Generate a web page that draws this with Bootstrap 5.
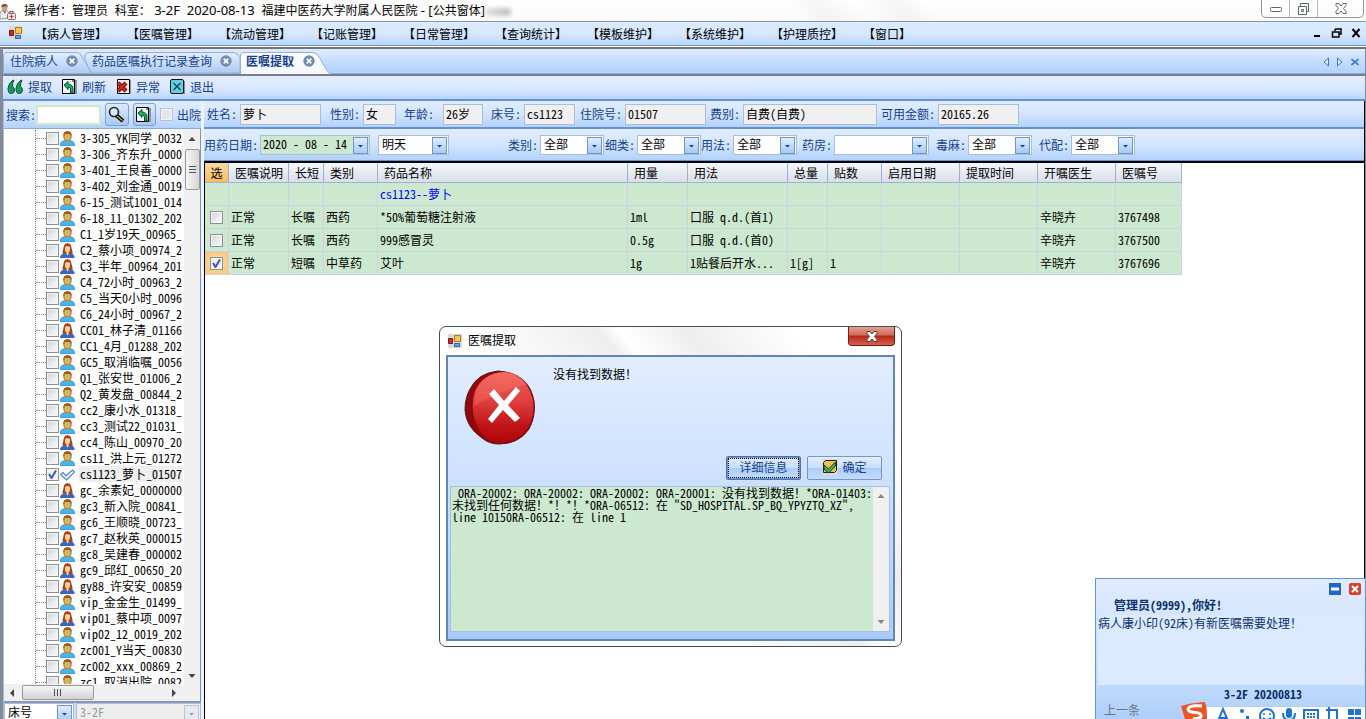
<!DOCTYPE html>
<html lang="zh-CN">
<head>
<meta charset="utf-8">
<meta name="viewport" content="width=device-width, initial-scale=1">
<title>医嘱提取</title>
<link href="https://cdn.jsdelivr.net/npm/bootstrap@5.3.0/dist/css/bootstrap.min.css" rel="stylesheet">
<style>
:root { --ink:#15428b; --line:#6593cf; --field:#a9bfd9; --mint:#cce8cf; --bar:linear-gradient(#e1edff,#d3e5ff 50%,#b3d2fc); }
body { font:12px/16px "Noto Sans CJK SC",sans-serif; font-feature-settings:"hwid"; color:#000; background:#fff; }
button,input,select,textarea { font:inherit; font-feature-settings:inherit; color:inherit; }
button { background:none; border:0; padding:0; }
svg { display:block; flex:none; }
.shell { height:100vh; min-width:1200px; }
.titlebar { height:22px; border-bottom:1px solid #8f959d; font-family:"Noto Sans","Noto Sans CJK SC",sans-serif; font-feature-settings:normal;
  background:linear-gradient(50deg,#fff0 58%,#eee8 60%,#fff0 63%,#eee8 66%,#fff0 68%),linear-gradient(#fff,#fafafa); }
.caption-text { white-space:pre; padding-top:2px; }
.caption-text span { font-size:13px; }
.smudge { width:26px; height:8px; border-radius:4px; background:linear-gradient(90deg,#e3e3e3,#bbb); filter:blur(2px); }
.win-buttons { width:103px; height:18px; margin-right:2px; border:1px solid #90949a; border-top:0; border-radius:0 0 5px 5px; }
.win-buttons button { width:28px; height:17px; border-right:1px solid #b5b8bc; }
.win-buttons button:last-child { flex:1; border:0; }
.menubar { height:24px; background:linear-gradient(#dceafd,#d6e8fe 50%,#b9d7fd); border-bottom:1px solid var(--line); padding:0 5px 0 9px; }
.menubar a { color:#000; text-decoration:none; width:92px; padding-top:1px; }
.frame { border:solid #858b96; border-width:2px 1px 0 3px; margin-top:1px; border-top-color:#77736c; min-height:0; }
.fill-rest { min-height:0; }
.tabstrip { height:25px; background:linear-gradient(#deebff,#c6ddff 50%,#b2d1fb); border-bottom:1px solid #8fb0dc; padding:3px 6px 0 0; color:var(--ink); }
.doc-tab { position:relative; height:21px; text-align:left; padding-bottom:2px; }
.doc-tab > svg:first-child { position:absolute; left:0; top:0; width:100%; height:21px; overflow:visible; }
.doc-tab > * { position:relative; }
.tab-a { width:81px; padding-left:7px; } .tab-b { width:156px; padding-left:8px; } .tab-c { width:90px; padding-left:6px; font-weight:700; z-index:1; }
.tools { height:28px; border-top:2px solid #7a7f8c; border-bottom:2px solid var(--line); background:linear-gradient(#e5ecfd,#d9e8fe 55%,#b8d6ff); padding-left:4px; color:var(--ink); }
.tools button { display:flex; align-items:center; gap:4px; margin-right:10px; height:20px; }
.side { width:201px; border-left:1px solid #a9bbda; border-right:3px solid #eef3fb; }
.search { height:28px; background:var(--bar); color:var(--ink); padding-left:2px; border-bottom:1px solid #8fa9cf; overflow:hidden; white-space:nowrap; }
.search input[type=text] { width:65px; height:20px; border:2px solid var(--mint); background:#fff; outline:0; }
.search button { width:24px; height:23px; border:1px solid #7f9fd0; border-radius:3px; background:linear-gradient(#dceafe,#a9c9f5); display:flex; align-items:center; justify-content:center; }
.box { appearance:none; flex:none; margin:0; width:13px; height:13px; border:1px solid #8e8f8f; background:linear-gradient(135deg,#cfd3d8,#fdfdfd); box-shadow:inset 0 0 0 1px #f4f4f4; }
.box:checked { background:url("data:image/svg+xml,%3Csvg xmlns='http://www.w3.org/2000/svg' viewBox='0 0 11 11'%3E%3Cpath d='M2 5l2.500 4L9 1.500' fill='none' stroke='%23405aa5' stroke-width='2'/%3E%3C/svg%3E") #eef1f6; }
.box.dim { border-color:#b4c2d6; background:#e3e6ea; }
.tree-wrap { min-height:0; border-right:1px solid #7e93b8; border-bottom:2px solid #8798b8; }
.tree { margin:1px 0 0 31px; padding:0; list-style:none; border-left:1px dotted #808080; flex:1; overflow:hidden; }
.tree li { height:16px; display:flex; align-items:center; white-space:pre; }
.tree li::before { content:""; width:10px; border-top:1px dotted #808080; }
.tree label { line-height:16px; margin-left:4px; padding-left:1px; flex:1; overflow:hidden; }
.tree .on label { background:#eee; }
.tree svg { margin-left:1px; }
.vbar { width:16px; background:#f0f0f0; margin-left:1px; }
.thumb { border:1px solid #989898; border-radius:2px; display:flex; align-items:center; justify-content:center; }
.vbar .thumb { height:41px; width:15px; background:linear-gradient(90deg,#f6f6f6,#d6d6d6); }
.hbar { height:17px; background:#f0f0f0; }
.hbar .thumb { width:72px; height:15px; background:linear-gradient(#f6f6f6,#d2d2d2); }
.side-foot { height:16px; overflow:hidden; background:#c9defb; gap:2px; }
.side-foot select:first-child { flex:0 0 70px; }
.combo { appearance:none; width:100%; height:20px; border:1px solid var(--field); border-radius:0; padding:0 18px 2px 3px; outline:0; line-height:16px;
  background:#fff url("data:image/svg+xml,%3Csvg xmlns='http://www.w3.org/2000/svg' width='15' height='17'%3E%3Cdefs%3E%3ClinearGradient id='g' x2='0' y2='1'%3E%3Cstop stop-color='%23e2edfd'/%3E%3Cstop offset='1' stop-color='%23a5c8f8'/%3E%3C/linearGradient%3E%3C/defs%3E%3Crect x='.5' y='.5' width='14' height='16' fill='url(%23g)' stroke='%237296c4'/%3E%3Cpath d='M5 8h5L7.500 10.500z' fill='%2315428b'/%3E%3C/svg%3E") right 1px top 1px no-repeat; }
.combo.mint { background-color:var(--mint); padding-left:2px; }
.combo:disabled { background:#eee url("data:image/svg+xml,%3Csvg xmlns='http://www.w3.org/2000/svg' width='15' height='17'%3E%3Crect x='.5' y='.5' width='14' height='16' fill='%23e6e9ee' stroke='%23b4c6e2'/%3E%3Cpath d='M5 8h5L7.500 10.500z' fill='%23999'/%3E%3C/svg%3E") right 1px top 1px no-repeat; color:#999; opacity:1; }
.content { border-right:1px solid #000; min-width:0; }
.fields { display:grid; align-items:center; background:var(--bar); color:var(--ink); }
.fields label { text-align:right; padding-right:3px; white-space:nowrap; }
.fields input,.fields select { color:#000; min-width:0; }
.patient { height:28px; border-bottom:2px solid var(--line); grid-template-columns:36px 81px 42px 33px 47px 40px 41px 51px 50px 81px 37px 134px 61px 81px; }
.patient input { height:21px; border:1px solid var(--field); background:#f0f0f0; padding:0 2px 2px; outline:0; }
.patient .roomy { padding-right:9px; }
.filters { height:32px; border-bottom:1px solid var(--line); grid-template-columns:56px 110px 8px 71px 91px 64px 33px 64px 32px 64px 37px 95px 39px 64px 39px 64px; }
.filters label { padding-right:2px; }
.orders-pane { border:2px solid #000; border-width:2px 0 0 1px; }
.orders { table-layout:fixed; width:977px; border-collapse:separate; border-spacing:0; white-space:nowrap; }
.orders th { height:20px; padding:0 4px 0 6px; font-weight:400; line-height:16px; background:linear-gradient(#f4f7fb,#d9dee8); border:solid #9cb4d2; border-width:0 1px 1px 0; }
.orders td { height:23px; padding:0 2px; background:var(--mint); border:solid #ccd2e3; border-width:0 1px 1px 0; overflow:hidden; }
.orders td.group-name { color:#00f; }
.orders th:first-child { background:linear-gradient(#fbd9a4,#f5bd62); }
.orders tr > :first-child { text-align:center; padding:0; }
.orders td .box { display:block; margin:0 auto; }
.orders .picked td:first-child { background:radial-gradient(#fbe0ad,#f6c374); }
.dialog-win { position:absolute; left:439px; top:326px; width:463px; border:1px solid #4b4b4b; border-radius:7px; padding:0 6px 5px; background:linear-gradient(50deg,#fff 40%,#eee 58%,#fff 61%,#eee 70%,#fff 85%); }
.dialog-head { height:28px; padding-left:2px; }
.dialog-head > svg { margin:7px 6px 0 0; }
.dialog-head > span { font-family:"Noto Sans","Noto Sans CJK SC",sans-serif; padding-top:6px; }
.close-red { width:47px; height:19px; border:1px solid #6d1d12; border-top:0; border-radius:0 0 4px 4px; background:linear-gradient(#e4a092,#cf6a58 45%,#b5261a 50%,#d9604d); display:flex; align-items:center; justify-content:center; }
.dialog-main { border:2px solid #5f86b8; background:linear-gradient(#e2edff,#cadfff 50%,#aacbfa); height:286px; padding:9px 3px 7px 2px; }
.dialog-text { gap:17px; padding-left:14px; }
.dialog-keys { gap:6px; padding-right:8px; margin-bottom:6px; }
.push { width:75px; height:24px; border:1px solid #7796c8; border-radius:2px; padding-bottom:2px; color:var(--ink); background:linear-gradient(#e3eefe,#c8defc 48%,#aaccfa 50%,#c4dcfd); display:flex; align-items:center; justify-content:center; gap:4px; }
.push.focus { outline:1px dotted #000; outline-offset:-3px; border-color:#4d73ad; box-shadow:inset 0 0 0 1px #6d93cc; }
.details { height:146px; border:1px solid #a4c0e6; background:var(--mint); }
.details textarea { flex:1; border:0; background:none; resize:none; padding:0 1px; line-height:12px; overflow:hidden; outline:0; white-space:pre; }
.notice { position:absolute; right:0; bottom:0; width:271px; height:141px; border:1px solid var(--line); border-bottom:0; color:#0b316f; background:linear-gradient(#e0ecff,#c1dafc 75%,#aecffb); overflow:hidden; }
.notice-title { padding:2px 0 2px 18px; }
.notice-body { margin:0 1px 0 2px; height:70px; background:#dbeafe; }
.notice-date { text-align:right; padding:1px 63px 0 0; }
.ime { position:absolute; right:0; bottom:0; width:185px; height:17px; overflow:hidden; }
.ime-bar { position:absolute; left:22px; right:0; top:4px; height:13px; background:#fff; border-top:1px solid #b9cfe8; }
.ime svg { position:relative; }
</style>
</head>
<body>
<svg width="0" height="0" class="position-absolute" aria-hidden="true"><defs>
  <linearGradient id="tabIdle" x2="0" y2="1"><stop stop-color="#e2eeff"/><stop offset="1" stop-color="#aecbf3"/></linearGradient>
  <linearGradient id="tabLive" x2="0" y2="1"><stop stop-color="#fff"/><stop offset="1" stop-color="#f3f8ff"/></linearGradient>
  <linearGradient id="disc" x2="0" y2="1"><stop stop-color="#f0605c"/><stop offset=".4" stop-color="#e04040"/><stop offset=".75" stop-color="#c01418"/><stop offset="1" stop-color="#b00508"/></linearGradient>
  <symbol id="man" viewBox="0 0 15 15"><path d="M0 15v-2q1-3 5-3.500h5q4 .5 4.500 3.500v2z" fill="#45b4f3" stroke="#2b86c5" stroke-width=".7"/><path d="M5 9h5l-2.500 3z" fill="#e0b060"/><ellipse cx="7.500" cy="5.500" rx="3.700" ry="4.700" fill="#d9b25c" stroke="#8b5a1c" stroke-width=".8"/><path d="M3.300 5Q3 0 7.500 .3 12 0 11.700 5L10 3H5z" fill="#9a5a1e"/></symbol>
  <symbol id="woman" viewBox="0 0 15 15"><path d="M3 12Q2 9 3.500 5 4 0 7.500 .3 11 0 11.500 5 13 9 12.500 12z" fill="#a5411f"/><path d="M0 15v-1.500q1-2.500 5-3h5q4 .5 4.500 3v1.500z" fill="#3c66c0"/><path d="M5 4q2.500-2 5 0v3q-.5 2-1.500 2.500v2l-1 1-1-1v-2Q5 9 5 7z" fill="#f6cf94"/></symbol>
  <symbol id="seen" viewBox="0 0 15 15"><path d="M.5 7.500L3 5.500 6 9l6.500-6L14.500 5 6.500 13z" fill="#fff" stroke="#3d82d6" stroke-width="1.200"/></symbol>
  <symbol id="form" viewBox="0 0 14 14"><path d="M0 0h14v14H0z" fill="#d8d8d8"/><path d="M.5 4.500h4v5h-4z" fill="#c43029" stroke="#85150f"/><path d="M6.500 1.500h6v6h-6z" fill="#f6c35c" stroke="#b77a12"/><path d="M6.500 9.500h5v3h-5z" fill="#62a6ef" stroke="#2464ba"/></symbol>
  <symbol id="back" viewBox="0 0 16 16"><path d="M1 1h14v14H1z" fill="#8d959b"/><path d="M.5.5h12v14H.5z" fill="#f4f7f8" stroke="#000"/><path d="M12.500 1v13M10 2h2" stroke="#000"/><path d="M2 6l4-3.500V5q5 .5 5 5v4H8.500v-4q0-2-2.500-2v2.500z" fill="#21b06c" stroke="#04502d"/></symbol>
  <symbol id="closer" viewBox="0 0 12 12"><circle cx="6" cy="6" r="5.700" fill="#758cae"/><path d="M3.700 3.700l4.600 4.600m0-4.600L3.700 8.300" stroke="#fff" stroke-width="1.700"/></symbol>
</defs></svg>

<div class="shell d-flex flex-column position-relative overflow-hidden">
  <header class="titlebar d-flex">
    <svg class="mt-1" width="16" height="16" viewBox="0 0 16 16"><circle cx="4.500" cy="3.500" r="3" fill="#d89873"/><path d="M1.500 3Q1 0 4.500 0 8 0 7.500 3L6 2z" fill="#6a4c3a"/><path d="M0 15V9q1-3 4.500-3T9 9l2 5z" fill="#e8edf2" stroke="#8c98a8"/><path d="M3 7l2 3 1-3" fill="#ca4b40"/><rect x="7.500" y="9.500" width="8" height="6" rx="1" fill="#e9e9ee" stroke="#777"/><path d="M10 9V7.500h3V9M11.500 10.500v4m-2-2h4" fill="none" stroke="#d33" stroke-width="1.200"/></svg>
    <span class="caption-text ms-2">操作者：管理员<span>  </span>科室：<span> 3-2F  2020-08-13  </span>福建中医药大学附属人民医院<span> - [</span>公共窗体<span>]</span></span>
    <span class="smudge mt-2"></span>
    <div class="win-buttons d-flex ms-auto">
      <button aria-label="最小化"><svg class="mx-auto" width="12" height="6" viewBox="0 0 12 6"><rect x=".5" y="1.500" width="11" height="4" rx="1" fill="#fff" stroke="#60646b"/></svg></button>
      <button aria-label="还原"><svg class="mx-auto" width="13" height="12" viewBox="0 0 13 12"><g fill="#fff" stroke="#60646b"><path d="M3.500.5h8v8h-8z"/><path d="M1.500 3.500h8v8h-8z"/><path d="M4.500 6.500h2v2h-2z"/></g></svg></button>
      <button aria-label="关闭"><svg class="mx-auto" width="12" height="11" viewBox="0 0 12 11"><path d="M1 .5h3l2 2.500 2-2.500h3v2L8.500 5.500 11 8.500v2H8L6 8l-2 2.500H1v-2l2.500-3L1 2.500z" fill="#fff" stroke="#60646b"/></svg></button>
    </div>
  </header>
  <nav class="menubar d-flex align-items-center">
    <svg class="me-2" width="14" height="14"><use href="#form"/></svg>
    <div class="d-flex ps-1">
      <a href="#">【病人管理】</a><a href="#">【医嘱管理】</a><a href="#">【流动管理】</a><a href="#">【记账管理】</a><a href="#">【日常管理】</a><a href="#">【查询统计】</a><a href="#">【模板维护】</a><a href="#">【系统维护】</a><a href="#">【护理质控】</a><a href="#">【窗口】</a>
    </div>
    <div class="d-flex gap-2 ms-auto align-items-center">
      <button aria-label="最小化子窗口"><svg width="12" height="10" viewBox="0 0 12 10"><path d="M3 7h6v2H3z"/></svg></button>
      <button aria-label="还原子窗口"><svg width="12" height="10" viewBox="0 0 12 10"><path d="M4 1h6v5H8M4 1v2M1.500 4H8v5H1.500z" fill="none" stroke="#000" stroke-width="1.500"/></svg></button>
      <button aria-label="关闭子窗口"><svg width="10" height="10" viewBox="0 0 10 10"><path d="M1.500 1l7 8m0-8l-7 8" stroke="#000" stroke-width="2"/></svg></button>
    </div>
  </nav>

  <div class="frame d-flex flex-column flex-grow-1">
    <div class="tabstrip d-flex">
      <button class="doc-tab tab-a d-flex align-items-center"><svg viewBox="0 0 81 21" preserveAspectRatio="none"><path d="M.5 21V3L3 .5h71Q77 .5 79 5l10 16" fill="url(#tabIdle)" stroke="#8fb0dd"/></svg><span>住院病人</span><svg class="ms-2" width="12" height="12"><use href="#closer"/></svg></button>
      <button class="doc-tab tab-b d-flex align-items-center"><svg viewBox="0 0 156 21" preserveAspectRatio="none"><path d="M7 21L1 8Q0 .5 5 .5h145q3 0 6 5V21z" fill="url(#tabIdle)" stroke="#8fb0dd"/></svg><span>药品医嘱执行记录查询</span><svg class="ms-auto me-2" width="12" height="12"><use href="#closer"/></svg></button>
      <button class="doc-tab tab-c d-flex align-items-center"><svg viewBox="0 0 90 21" preserveAspectRatio="none"><path d="M.5 22V3L3 .5h70q4 0 7 6l7 12q2 3 4 3.500" fill="url(#tabLive)" stroke="#8fb0dd"/></svg><span>医嘱提取</span><svg class="ms-2" width="14" height="12"><use href="#closer"/></svg></button>
      <div class="d-flex gap-2 ms-auto align-items-center">
        <button aria-label="上一页"><svg width="6" height="10" viewBox="0 0 6 10"><path d="M5.500 1v8L1 5z" fill="#dbe9ff" stroke="#3278d6"/></svg></button>
        <button aria-label="下一页"><svg width="6" height="10" viewBox="0 0 6 10"><path d="M.5 1v8L5 5z" fill="#dbe9ff" stroke="#3278d6"/></svg></button>
        <button aria-label="关闭页"><svg width="8" height="8" viewBox="0 0 8 8"><path d="M.5 1l7 6m0-6l-7 6" stroke="#3278d6" stroke-width="1.600"/></svg></button>
      </div>
    </div>
    <div class="tools d-flex align-items-center">
      <button><svg width="17" height="16" viewBox="0 0 17 16"><path d="M6 1Q1.500 4 1 9.500q0 5 3.200 5 3.300 0 3.300-3.500Q7.500 8.500 5.500 7.500 5 4 7 1.500zm8 0q-4.500 3-5 8.500 0 5 3.200 5 3.300 0 3.300-3.500 0-2.500-2-3.500-.5-3.500 1.500-6z" fill="#169b5c" stroke="#085032"/></svg><span>提取</span></button>
      <button><svg width="16" height="16"><use href="#back"/></svg><span>刷新</span></button>
      <button><svg width="16" height="16" viewBox="0 0 16 16"><path d="M2 1h13v14H2z" fill="#999"/><path d="M1.500.500h12v14h-12z" fill="#eee" stroke="#000"/><path d="M2 4l8 8m0-8l-8 8" stroke="#5a0906" stroke-width="4"/><path d="M2 4l8 8m0-8l-8 8" stroke="#df2620" stroke-width="2"/></svg><span>异常</span></button>
      <button><svg width="16" height="16" viewBox="0 0 16 16"><path d="M2 2h13v13H2z" fill="#888"/><rect x=".5" y=".5" width="13" height="14" rx="1.500" fill="#5fd0e0" stroke="#111"/><path d="M3.500 4l7 7m0-7l-7 7" stroke="#123a5a" stroke-width="1.200"/></svg><span>退出</span></button>
    </div>

    <div class="fill-rest d-flex flex-grow-1">
      <aside class="side d-flex flex-column flex-shrink-0">
        <div class="search d-flex align-items-center">
          <label for="kw">搜索:</label><input id="kw" type="text">
          <button class="ms-1" aria-label="查找"><svg width="17" height="17" viewBox="0 0 17 17"><path d="M8 9l7 6" stroke="#000" stroke-width="4"/><path d="M9 10l5.500 4.500" stroke="#c7a43e" stroke-width="1.500"/><circle cx="6" cy="6" r="4.500" fill="#d6e8f6" stroke="#222" stroke-width="1.600"/><path d="M4 5q1-2 3-1" fill="none" stroke="#fff"/></svg></button>
          <button class="ms-1" aria-label="刷新列表"><svg width="16" height="16"><use href="#back"/></svg></button>
          <input id="out" type="checkbox" class="box dim ms-1 me-1"><label for="out">出院</label>
        </div>
        <div class="tree-wrap d-flex flex-column flex-grow-1">
          <div class="fill-rest d-flex flex-grow-1">
            <ul class="tree" id="tree"></ul>
            <div class="vbar d-flex flex-column align-items-center">
              <svg width="16" height="20" viewBox="0 0 16 20"><path d="M4.500 12L8 8l3.500 4z" fill="#444"/></svg>
              <div class="thumb"><svg width="7" height="8" viewBox="0 0 7 8"><path d="M0 .5h7M0 3.500h7M0 6.500h7" stroke="#555"/></svg></div>
              <svg class="mt-auto" width="16" height="17" viewBox="0 0 16 17"><path d="M4.500 7L8 11l3.500-4z" fill="#444"/></svg>
            </div>
          </div>
          <div class="hbar d-flex align-items-center">
            <svg width="18" height="16" viewBox="0 0 18 16"><path d="M10 4L6 8l4 4z" fill="#444"/></svg>
            <div class="thumb"><svg width="8" height="7" viewBox="0 0 8 7"><path d="M.5 0v7M3.500 0v7M6.500 0v7" stroke="#555"/></svg></div>
            <svg class="ms-auto me-3" width="16" height="16" viewBox="0 0 16 16"><path d="M4 4l4 4-4 4z" fill="#444"/></svg>
          </div>
        </div>
        <div class="side-foot d-flex">
          <select class="combo" aria-label="排序"><option>床号</option></select>
          <select class="combo" aria-label="病区" disabled><option>3-2F</option></select>
        </div>
      </aside>

      <main class="content d-flex flex-column flex-grow-1">
        <div class="patient fields">
          <label for="p1">姓名:</label><input id="p1" value="萝卜" readonly>
          <label for="p2">性别:</label><input id="p2" value="女" readonly>
          <label for="p3" class="roomy">年龄:</label><input id="p3" value="26岁" readonly>
          <label for="p4">床号:</label><input id="p4" value="cs1123" readonly>
          <label for="p5">住院号:</label><input id="p5" value="01507" readonly>
          <label for="p6">费别:</label><input id="p6" value="自费(自费)" readonly>
          <label for="p7">可用金额:</label><input id="p7" value="20165.26" readonly>
        </div>
        <div class="filters fields">
          <label for="f1">用药日期:</label><input id="f1" class="combo mint" value="2020 - 08 - 14">
          <span></span><select class="combo" aria-label="日期快选"><option>明天</option></select>
          <label for="f2">类别:</label><select id="f2" class="combo"><option>全部</option></select>
          <label for="f3">细类:</label><select id="f3" class="combo"><option>全部</option></select>
          <label for="f4">用法:</label><select id="f4" class="combo"><option>全部</option></select>
          <label for="f5">药房:</label><select id="f5" class="combo"><option></option></select>
          <label for="f6">毒麻:</label><select id="f6" class="combo"><option>全部</option></select>
          <label for="f7">代配:</label><select id="f7" class="combo"><option>全部</option></select>
        </div>
        <div class="orders-pane flex-grow-1">
          <table class="orders">
            <colgroup><col width="24"><col width="60"><col width="35"><col width="54"><col width="250"><col width="60"><col width="100"><col width="40"><col width="54"><col width="78"><col width="78"><col width="78"><col width="66"></colgroup>
            <thead><tr><th>选</th><th>医嘱说明</th><th>长短</th><th>类别</th><th>药品名称</th><th>用量</th><th>用法</th><th>总量</th><th>贴数</th><th>启用日期</th><th>提取时间</th><th>开嘱医生</th><th>医嘱号</th></tr></thead>
            <tbody>
              <tr><td></td><td></td><td></td><td></td><td class="group-name">cs1123--萝卜</td><td></td><td></td><td></td><td></td><td></td><td></td><td></td><td></td></tr>
              <tr><td><input type="checkbox" class="box" aria-label="选择 3767498"></td><td>正常</td><td>长嘱</td><td>西药</td><td>*50%葡萄糖注射液</td><td>1ml</td><td>口服 q.d.(首1)</td><td></td><td></td><td></td><td></td><td>辛晓卉</td><td>3767498</td></tr>
              <tr><td><input type="checkbox" class="box" aria-label="选择 3767500"></td><td>正常</td><td>长嘱</td><td>西药</td><td>999感冒灵</td><td>0.5g</td><td>口服 q.d.(首0)</td><td></td><td></td><td></td><td></td><td>辛晓卉</td><td>3767500</td></tr>
              <tr class="picked"><td><input type="checkbox" class="box" checked aria-label="选择 3767696"></td><td>正常</td><td>短嘱</td><td>中草药</td><td>艾叶</td><td>1g</td><td>1贴餐后开水...</td><td>1[g]</td><td>1</td><td></td><td></td><td>辛晓卉</td><td>3767696</td></tr>
            </tbody>
          </table>
        </div>
      </main>
    </div>
  </div>

  <section class="dialog-win" role="dialog" aria-label="医嘱提取">
    <div class="dialog-head d-flex">
      <svg width="14" height="14"><use href="#form"/></svg><span>医嘱提取</span>
      <button class="close-red ms-auto" aria-label="关闭"><svg width="12" height="11" viewBox="0 0 12 11"><path d="M1 .5h3l2 2.500 2-2.500h3v2L8.500 5.500 11 8.500v2H8L6 8l-2 2.500H1v-2l2.500-3L1 2.500z" fill="#fff" stroke="#5b3a3a"/></svg></button>
    </div>
    <div class="dialog-main d-flex flex-column">
      <div class="dialog-text d-flex">
        <svg class="mt-1" width="72" height="75" viewBox="0 0 72 75"><path d="M34 1Q14 3 6 19 1 28 1 40q1 17 17 28 7 6 17 6 20 0 30-15 7-13 5-28Q65 3 34 1z" fill="#8e090b" stroke="#5c1512"/><path d="M40 2Q19 3 11 21 4 44 18 64q8 9 18 9 19-1 28-15 7-13 5-28Q62 4 40 2z" fill="url(#disc)"/><path d="M12 22Q20 3 40 2q16 1 25 12-28 6-55 22z" fill="#ff8a76" opacity=".25"/><path d="M25 24l5-5 10 12 12-14 4 4-12 14 12 13-5 4-12-12-11 13-4-4 11-14z" fill="#fff"/></svg>
        <span>没有找到数据！</span>
      </div>
      <div class="dialog-keys d-flex justify-content-end mt-auto">
        <button class="push focus">详细信息</button>
        <button class="push"><svg width="16" height="16" viewBox="0 0 16 16"><path d="M0 0h16v16H0z" fill="#d7dce2"/><path d="M1.500 3.500l2-2h11v10l-2 2h-11z" fill="#eebf56" stroke="#222"/><path d="M2 6l4.500 4 7-7v4l-7 7L2 10z" fill="#45b25a" stroke="#123f1c"/></svg><span>确定</span></button>
      </div>
      <div class="details d-flex">
        <textarea aria-label="错误详情" wrap="off" readonly> ORA-20002: ORA-20002: ORA-20002: ORA-20001: 没有找到数据！*ORA-01403:
未找到任何数据！*！*！*ORA-06512: 在 "SD_HOSPITAL.SP_BQ_YPYZTQ_XZ",
line 10150RA-06512: 在 line 1</textarea>
        <div class="vbar d-flex flex-column"><svg width="16" height="17" viewBox="0 0 16 17"><path d="M4.500 11L8 7l3.500 4z" fill="#888"/></svg><svg class="mt-auto" width="16" height="17" viewBox="0 0 16 17"><path d="M4.500 6L8 10l3.500-4z" fill="#888"/></svg></div>
      </div>
    </div>
  </section>

  <section class="notice">
    <div class="d-flex justify-content-end gap-2 pt-1 pe-1">
      <button aria-label="收起"><svg width="12" height="12" viewBox="0 0 12 12"><path d="M0 0h12v12H0z" fill="#1f66cd"/><path d="M2 4.500h8v3H2z" fill="#fff"/></svg></button>
      <button aria-label="关闭通知"><svg width="12" height="12" viewBox="0 0 12 12"><rect width="12" height="12" rx="2" fill="#d8402c"/><path d="M3 3l6 6m0-6L3 9" stroke="#fff" stroke-width="2"/></svg></button>
    </div>
    <div class="notice-title fw-bold">管理员(9999),你好!</div>
    <div class="notice-body">病人康小印(92床)有新医嘱需要处理！</div>
    <div class="notice-date fw-bold">3-2F 20200813</div>
    <button class="text-secondary ms-2">上一条</button>
    <div class="ime">
      <div class="ime-bar"></div>
      <svg width="185" height="17" viewBox="0 0 185 17">
        <path d="M1 4Q10 1 24 0q3 0 3 17H5z" fill="#ea5427"/><path d="M22 4Q9 3 8 7q0 3 7 3.500 7 .5 6 4-1 2-8 2.500" fill="none" stroke="#fff" stroke-width="3"/>
        <g fill="none" stroke="#1d74d2" stroke-width="2"><path d="M38 19l5-12 5 12M40 16h6"/><circle cx="87" cy="14" r="7"/><path d="M83 16q4 4 8 0"/><path d="M103 11q0 7 6 7t6-7"/><path d="M124 8h14v10h-14z"/><path d="M127 12h9m-9 3h9" stroke-dasharray="2 1"/><path d="M146 8h11v10m-8-13v12"/></g>
        <g fill="#1d74d2"><circle cx="62" cy="9" r="2"/><path d="M66 14h3v3h-3z"/><circle cx="84" cy="12" r="1"/><circle cx="90" cy="12" r="1"/><rect x="106" y="6" width="6" height="10" rx="3"/><path d="M168 7h6v6h-6zm7 0h6v6h-6zm-7 8h6v3h-6zm7 0h6v3h-6z"/></g>
      </svg>
    </div>
  </section>
</div>

<script src="https://cdn.jsdelivr.net/npm/bootstrap@5.3.0/dist/js/bootstrap.bundle.min.js"></script>
<script>
// Each entry: icon key (m, w, or s for the ticked patient) and the node caption
const patients = [
 ['m','3-305_YK同学_0032'],['m','3-306_齐东升_0000'],['m','3-401_王良善_0000'],['m','3-402_刘金通_0019'],['m','6-15_测试1001_014'],['m','6-18_11_01302_202'],
 ['m','C1_1岁19天_00965_'],['w','C2_蔡小项_00974_2'],['w','C3_半年_00964_201'],['m','C4_72小时_00963_2'],['m','C5_当天0小时_0096'],['m','C6_24小时_00967_2'],
 ['w','CC01_林子清_01166'],['m','CC1_4月_01288_202'],['m','GC5_取消临嘱_0056'],['m','Q1_张安世_01006_2'],['m','Q2_黄发盘_00844_2'],['m','cc2_康小水_01318_'],
 ['m','cc3_测试22_01031_'],['w','cc4_陈山_00970_20'],['m','cs11_洪上元_01272'],['s','cs1123_萝卜_01507'],['w','gc_余素妃_0000000'],['m','gc3_新入院_00841_'],
 ['m','gc6_王顺晓_00723_'],['w','gc7_赵秋英_000015'],['m','gc8_吴建春_000002'],['w','gc9_邱红_00650_20'],['w','gy88_许安安_00859'],['m','vip_金金生_01499_'],
 ['w','vip01_蔡中项_0097'],['m','vip02_12_0019_202'],['m','zc001_Y当天_00830'],['m','zc002_xxx_00869_2'],['m','zc1_取消出院_0082']];
const icon = { m:'man', w:'woman', s:'seen' };
document.getElementById('tree').innerHTML = patients.map(([k,t],i) =>
 `<li class="${k==='s'?'on':''}"><input type="checkbox" class="box" id="n${i}" ${k==='s'?'checked':''}><svg width="15" height="15"><use href="#${icon[k]}"/></svg><label for="n${i}">${t}</label></li>`).join('');
</script>
</body>
</html>
